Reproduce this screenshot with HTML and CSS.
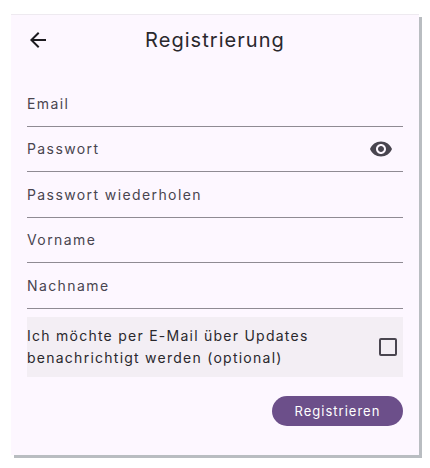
FILE: index.html
```html
<!DOCTYPE html>
<html lang="de">
<head>
  <meta charset="UTF-8" />
  <meta name="viewport" content="width=device-width, initial-scale=1.0" />
  <title>Registrierung</title>
  <link rel="stylesheet" href="styles.css">
</head>
<body>
  <div class="screen">
    <div class="app-bar">
      <svg class="back" width="24" height="24" viewBox="0 0 24 24"><path d="M20 11H7.83l5.59-5.59L12 4l-8 8 8 8 1.41-1.41L7.83 13H20v-2z"/></svg>
      <h1>Registrierung</h1>
    </div>
    <form class="form">
      <div class="field"><span>Email</span></div>
      <div class="field">
        <span>Passwort</span>
        <svg class="eye" width="24" height="24" viewBox="0 0 24 24"><path d="M12 4.5C7 4.5 2.73 7.61 1 12c1.73 4.39 6 7.5 11 7.5s9.27-3.11 11-7.5c-1.73-4.39-6-7.5-11-7.5zM12 17c-2.76 0-5-2.24-5-5s2.24-5 5-5 5 2.24 5 5-2.24 5-5 5zm0-8c-1.66 0-3 1.34-3 3s1.34 3 3 3 3-1.34 3-3-1.34-3-3-3z"/></svg>
      </div>
      <div class="field"><span>Passwort wiederholen</span></div>
      <div class="field"><span>Vorname</span></div>
      <div class="field"><span>Nachname</span></div>
      <div class="optin">
        <p>Ich möchte per E-Mail über Updates benachrichtigt werden (optional)</p>
        <div class="checkbox"></div>
      </div>
      <div class="actions">
        <button type="button" class="submit">Registrieren</button>
      </div>
    </form>
  </div>
</body>
</html>
```

FILE: styles.css
```css
body {
  margin: 0;
  padding: 14px 0 0 11px;
  height: 468px;
  box-sizing: border-box;
  background-color: #fff;
  font-family: 'Inter', 'Lato', sans-serif;
  color: #1d1b20;
}

.screen {
  width: 408px;
  height: 441px;
  background-color: #fdf7ff;
  border-top: 1px solid #eeeaf0;
  box-sizing: border-box;
  box-shadow: 3px 3px 0 #b9bdc1;
}

.app-bar {
  display: flex;
  align-items: center;
  height: 50px;
  padding: 0 15px;
}

.back {
  fill: #1d1b20;
  flex: none;
}

.app-bar h1 {
  flex: 1;
  margin: 0 24px 0 0;
  text-align: center;
  font-size: 20px;
  font-weight: 400;
  letter-spacing: 1.05px;
  color: #2a282d;
}

.form {
  padding: 16px 16px 0 16px;
}

.field {
  display: flex;
  align-items: center;
  justify-content: space-between;
  height: 45.5px;
  box-sizing: border-box;
  border-bottom: 1.5px solid #8f8b93;
  font-size: 14px;
  letter-spacing: 1.4px;
  color: #49454f;
}

.eye {
  fill: #49454f;
  margin-right: 10px;
}

.optin {
  display: flex;
  align-items: center;
  justify-content: space-between;
  height: 60px;
  margin-top: 8px;
  background-color: #f3eef4;
}

.optin p {
  margin: 0;
  width: 330px;
  font-size: 14px;
  line-height: 22px;
  letter-spacing: 1.25px;
  color: #2a282d;
}

.checkbox {
  width: 14px;
  height: 14px;
  margin-right: 6px;
  border: 2px solid #49454f;
  border-radius: 2px;
}

.actions {
  display: flex;
  justify-content: flex-end;
  margin-top: 19px;
}

.submit {
  width: 131px;
  height: 30px;
  border: 0;
  border-radius: 15px;
  background-color: #6c4f8a;
  color: #fff;
  font-family: inherit;
  font-size: 13px;
  letter-spacing: 1px;
}
```
